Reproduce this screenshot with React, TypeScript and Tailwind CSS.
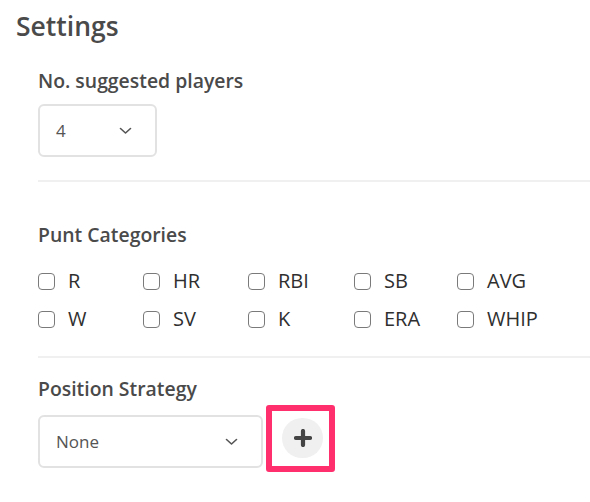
import React from 'react';

const puntRows = [
  ['R', 'HR', 'RBI', 'SB', 'AVG'],
  ['W', 'SV', 'K', 'ERA', 'WHIP'],
];

function Chevron() {
  return (
    <svg width="13" height="8" viewBox="0 0 13 8" fill="none">
      <polyline points="1.5,1.5 6.5,6 11.5,1.5" stroke="#555" strokeWidth="1.6" strokeLinecap="round" strokeLinejoin="round" />
    </svg>
  );
}

function SelectBox({ value, width }: { value: string; width: string }) {
  return (
    <div
      className={`${width} h-[53px] flex items-center justify-between pl-[16px] pr-[23px] border-2 border-[#e2e2e2] rounded-[6px] bg-white`}
    >
      <span className="text-[17px] text-[#555]">{value}</span>
      <Chevron />
    </div>
  );
}

function Checkbox({ label }: { label: string }) {
  return (
    <label className="flex items-center">
      <span className="w-[17px] h-[17px] rounded-[4px] border-[1.5px] border-[#7a7a7a] bg-white" />
      <span className="ml-[13px] text-[20px] text-[#2f2f2f]">{label}</span>
    </label>
  );
}

export default function App() {
  return (
    <div className="w-[590px] h-[502px] bg-white overflow-hidden font-['Open_Sans',sans-serif]">
      <h1 className="pl-[16px] pt-[8px] text-[26.5px] leading-[36px] font-semibold text-[#4a4a4a]">Settings</h1>

      <div className="pl-[38px]">
        <h2 className="mt-[24px] text-[19.4px] leading-[26px] font-semibold text-[#4a4a4a]">No. suggested players</h2>
        <div className="mt-[10px]">
          <SelectBox value="4" width="w-[119px]" />
        </div>

        <div className="mt-[23px] h-[2px] bg-[#f0f0f0]" />

        <h2 className="mt-[40px] text-[19.4px] leading-[26px] font-semibold text-[#4a4a4a]">Punt Categories</h2>
        <div className="mt-[14px]">
          {puntRows.map((row, i) => (
            <div key={i} className="grid grid-cols-[105px_105px_106px_103px_120px] leading-[38px]">
              {row.map((c) => (
                <Checkbox key={c} label={c} />
              ))}
            </div>
          ))}
        </div>

        <div className="mt-[18px] h-[2px] bg-[#f0f0f0]" />

        <h2 className="mt-[18px] text-[19.4px] leading-[26px] font-semibold text-[#4a4a4a]">Position Strategy</h2>
        <div className="mt-[3px] flex items-start">
          <div className="mt-[10px]">
            <SelectBox value="None" width="w-[225px]" />
          </div>
          {/* highlighted add button */}
          <div className="ml-[3px] w-[69px] h-[67px] border-[6px] border-[#ff2f6e] rounded-[3px] pl-[10px] pt-[7px]">
            <button className="w-[41px] h-[40px] rounded-full bg-[#f0f0f0] flex items-center justify-center">
              <svg width="18" height="18" viewBox="0 0 18 18">
                <path d="M9 2v14M2 9h14" stroke="#444" strokeWidth="4.2" strokeLinecap="round" />
              </svg>
            </button>
          </div>
        </div>
      </div>
    </div>
  );
}
